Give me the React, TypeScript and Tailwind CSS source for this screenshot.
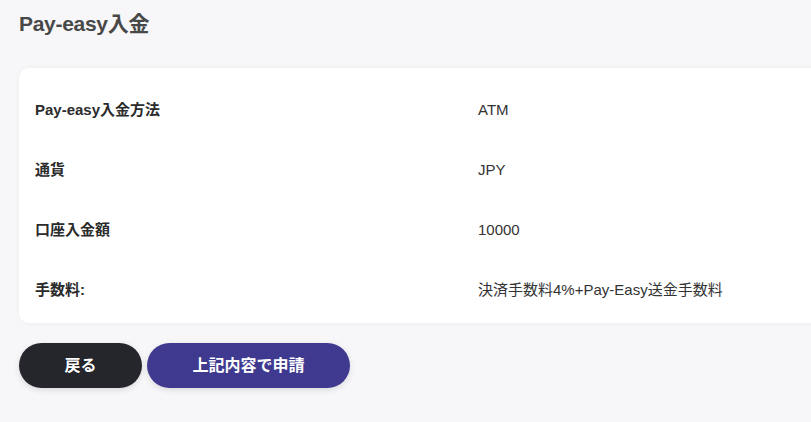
const rows: [string, string][] = [
  ['Pay-easy入金方法', 'ATM'],
  ['通貨', 'JPY'],
  ['口座入金額', '10000'],
  ['手数料:', '決済手数料4%+Pay-Easy送金手数料'],
]

export default function App() {
  return (
    <div
      className="min-h-[422px] w-[811px] overflow-hidden bg-[#f7f7f9] pl-[19px] pt-[11px]"
      style={{ fontFamily: '"Liberation Sans", "Noto Sans CJK JP", sans-serif' }}
    >
      <h1 className="text-[21px] leading-[26px] font-bold tracking-[-0.3px] text-[#484848]">Pay-easy入金</h1>

      <div className="mt-[31px] w-[900px] rounded-[10px] bg-white pb-[3px] pl-4 pt-3 shadow-[0_0_6px_rgba(0,0,0,0.04)]">
        {rows.map(([label, value]) => (
          <div key={label} className="grid h-[60px] grid-cols-[443px_1fr] items-center text-[15px]">
            <span className="font-bold text-[#2b2b2b]">{label}</span>
            <span className="text-[#333333]">{value}</span>
          </div>
        ))}
      </div>

      <div className="mt-5 flex gap-[5px]">
        <button className="h-[45px] w-[123px] rounded-full bg-[#25252c] text-[16px] font-bold text-white shadow-[0_2px_6px_rgba(0,0,0,0.12)]">
          戻る
        </button>
        <button className="h-[45px] w-[203px] rounded-full bg-[#3f3a8f] text-[16px] font-bold text-white shadow-[0_2px_6px_rgba(0,0,0,0.12)]">
          上記内容で申請
        </button>
      </div>
    </div>
  )
}
